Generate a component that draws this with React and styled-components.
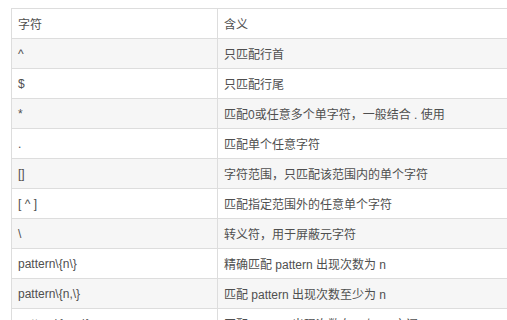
import styled, { createGlobalStyle } from "styled-components";

const GlobalStyle = createGlobalStyle`
  html, body {
    margin: 0;
    padding: 0;
    background: #fff;
    overflow: hidden;
  }
  body {
    font-family: "Liberation Sans", Arial, "Noto Sans CJK SC", sans-serif;
  }
`;

// 表格数据：字符 / 含义
const rows = [
  ["^", "只匹配行首"],
  ["$", "只匹配行尾"],
  ["*", "匹配0或任意多个单字符，一般结合 . 使用"],
  [".", "匹配单个任意字符"],
  ["[]", "字符范围，只匹配该范围内的单个字符"],
  ["[ ^ ]", "匹配指定范围外的任意单个字符"],
  ["\\", "转义符，用于屏蔽元字符"],
  ["pattern\\{n\\}", "精确匹配 pattern 出现次数为 n"],
  ["pattern\\{n,\\}", "匹配 pattern 出现次数至少为 n"],
  ["pattern\\{n,m\\}", "匹配 pattern 出现次数在 n 与 m 之间"],
];

const Page = styled.div`
  padding: 8px 0 0 11px;
`;

const Table = styled.div`
  width: 540px;
  border-top: 1px solid #dddddd;
  border-left: 1px solid #dddddd;
`;

const Row = styled.div`
  display: grid;
  grid-template-columns: 206px 1fr;
  background: ${({ $striped }) => ($striped ? "#f6f6f6" : "#ffffff")};
`;

const Cell = styled.div`
  box-sizing: border-box;
  height: 30px;
  display: flex;
  align-items: center;
  padding: 0 6px;
  border-right: 1px solid #dddddd;
  border-bottom: 1px solid #dddddd;
  font-size: 12px;
  color: #4f4f4f;
  white-space: pre;
`;

export default function App() {
  return (
    <Page>
      <GlobalStyle />
      <Table>
        <Row>
          <Cell>字符</Cell>
          <Cell>含义</Cell>
        </Row>
        {rows.map(([ch, meaning], i) => (
          <Row key={i} $striped={i % 2 === 0}>
            <Cell>{ch}</Cell>
            <Cell>{meaning}</Cell>
          </Row>
        ))}
      </Table>
    </Page>
  );
}
